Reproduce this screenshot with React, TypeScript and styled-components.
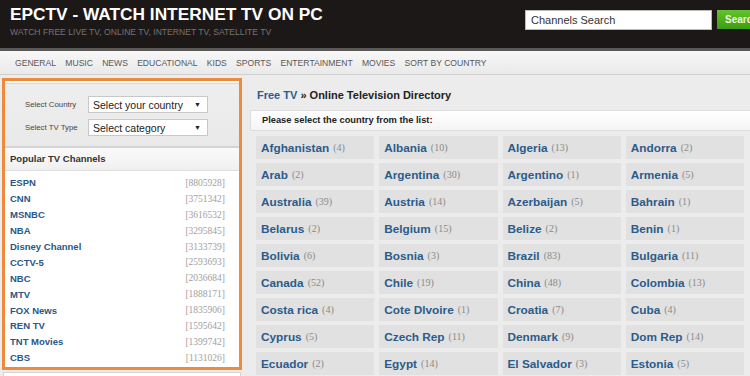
import styled, { createGlobalStyle } from "styled-components";

const GlobalStyle = createGlobalStyle`
  html, body {
    margin: 0;
    padding: 0;
    background: #ececec;
    font-family: "Liberation Sans", Arial, sans-serif;
    overflow: hidden;
  }
`;

const menu = [
  "GENERAL",
  "MUSIC",
  "NEWS",
  "EDUCATIONAL",
  "KIDS",
  "SPORTS",
  "ENTERTAINMENT",
  "MOVIES",
  "SORT BY COUNTRY",
];

const channels: [string, string][] = [
  ["ESPN", "8805928"],
  ["CNN", "3751342"],
  ["MSNBC", "3616532"],
  ["NBA", "3295845"],
  ["Disney Channel", "3133739"],
  ["CCTV-5", "2593693"],
  ["NBC", "2036684"],
  ["MTV", "1888171"],
  ["FOX News", "1835906"],
  ["REN TV", "1595642"],
  ["TNT Movies", "1399742"],
  ["CBS", "1131026"],
];

const countries: [string, number][] = [
  ["Afghanistan", 4], ["Albania", 10], ["Algeria", 13], ["Andorra", 2],
  ["Arab", 2], ["Argentina", 30], ["Argentino", 1], ["Armenia", 5],
  ["Australia", 39], ["Austria", 14], ["Azerbaijan", 5], ["Bahrain", 1],
  ["Belarus", 2], ["Belgium", 15], ["Belize", 2], ["Benin", 1],
  ["Bolivia", 6], ["Bosnia", 3], ["Brazil", 83], ["Bulgaria", 11],
  ["Canada", 52], ["Chile", 19], ["China", 48], ["Colombia", 13],
  ["Costa rica", 4], ["Cote Dlvoire", 1], ["Croatia", 7], ["Cuba", 4],
  ["Cyprus", 5], ["Czech Rep", 11], ["Denmark", 9], ["Dom Rep", 14],
  ["Ecuador", 2], ["Egypt", 14], ["El Salvador", 3], ["Estonia", 5],
];

const App = () => {
  return (
    <Page>
      <GlobalStyle />
      <Header>
        <Brand>
          <SiteTitle>EPCTV - WATCH INTERNET TV ON PC</SiteTitle>
          <Tagline>WATCH FREE LIVE TV, ONLINE TV, INTERNET TV, SATELLITE TV</Tagline>
        </Brand>
        <SearchForm>
          <SearchInput>Channels Search</SearchInput>
          <SearchButton>Search</SearchButton>
        </SearchForm>
      </Header>
      <Nav>
        {menu.map((item) => (
          <NavItem key={item}>{item}</NavItem>
        ))}
      </Nav>
      <Content>
        <SidebarColumn>
          <Highlight>
            <Filters>
              <FilterLabel>Select Country</FilterLabel>
              <FakeSelect>
                Select your country <Arrow>▼</Arrow>
              </FakeSelect>
              <FilterLabel>Select TV Type</FilterLabel>
              <FakeSelect>
                Select category <Arrow>▼</Arrow>
              </FakeSelect>
            </Filters>
            <PopularHeader>Popular TV Channels</PopularHeader>
            <ChannelList>
              {channels.map(([name, count]) => (
                <ChannelRow key={name}>
                  <ChannelName>{name}</ChannelName>
                  <ChannelCount>[{count}]</ChannelCount>
                </ChannelRow>
              ))}
            </ChannelList>
          </Highlight>
          <NextPanel />
        </SidebarColumn>
        <Main>
          <Breadcrumb>
            <Crumb>Free TV</Crumb> » Online Television Directory
          </Breadcrumb>
          <Notice>Please select the country from the list:</Notice>
          <CountryGrid>
            {countries.map(([name, n]) => (
              <CountryCell key={name}>
                {name}
                <CountryCount>({n})</CountryCount>
              </CountryCell>
            ))}
          </CountryGrid>
        </Main>
      </Content>
    </Page>
  );
};

const Page = styled.div`
  width: 750px;
  height: 376px;
  overflow: hidden;
`;

const Header = styled.header`
  height: 48px;
  background: #1c1817;
  border-bottom: 3px solid #5a5857;
  display: flex;
  align-items: flex-start;
  padding-left: 10px;
`;

const Brand = styled.div`
  padding-top: 5px;
`;

const SiteTitle = styled.h1`
  margin: 0;
  font-size: 17.3px;
  line-height: 18px;
  font-weight: bold;
  color: #ffffff;
`;

const Tagline = styled.div`
  margin-top: 4px;
  font-size: 8.6px;
  color: #767473;
`;

const SearchForm = styled.div`
  margin-left: auto;
  margin-right: -29px;
  margin-top: 10px;
  display: flex;
  gap: 5px;
  flex-shrink: 0;
`;

const SearchInput = styled.div`
  width: 180px;
  height: 18px;
  background: #fff;
  border: 1px solid #bbb;
  padding-left: 5px;
  font-size: 11px;
  line-height: 18px;
  color: #333;
`;

const SearchButton = styled.div`
  width: 54px;
  height: 19px;
  background: linear-gradient(#62c42a, #3e9d12);
  color: #eaf7dd;
  font-size: 10px;
  font-weight: bold;
  line-height: 19px;
  padding-left: 8px;
`;

const Nav = styled.nav`
  height: 23px;
  background: linear-gradient(#f8f8f8, #e9e9e9);
  border-bottom: 1px solid #cfcfcf;
  display: flex;
  align-items: center;
  gap: 9.2px;
  padding-left: 15px;
`;

const NavItem = styled.span`
  font-size: 8.6px;
  color: #575757;
  white-space: nowrap;
`;

const Content = styled.div`
  display: flex;
  gap: 8px;
  padding: 3px 0 0 2px;
`;

const SidebarColumn = styled.aside`
  width: 240px;
  flex-shrink: 0;
  display: flex;
  flex-direction: column;
`;

const Highlight = styled.div`
  border: 3px solid #ef8a3c;
  background: #fff;
`;

const Filters = styled.div`
  margin-top: 2px;
  border-top: 1px solid #d9d9d9;
  border-bottom: 2px solid #d4d4d4;
  background: linear-gradient(#eeeeee, #e9e9e9);
  padding: 12px 0 10px 20px;
  display: grid;
  grid-template-columns: 55px 120px;
  column-gap: 8px;
  row-gap: 6px;
  align-items: center;
`;

const FilterLabel = styled.span`
  font-size: 7.8px;
  color: #444;
  white-space: nowrap;
`;

const FakeSelect = styled.div`
  height: 15px;
  background: #fff;
  border: 1px solid #c8c8c8;
  padding: 0 6px 0 4px;
  display: flex;
  align-items: center;
  justify-content: space-between;
  font-size: 10.5px;
  color: #222;
`;

const Arrow = styled.span`
  font-size: 7px;
  color: #222;
`;

const PopularHeader = styled.div`
  height: 22px;
  line-height: 22px;
  background: linear-gradient(#fafafa, #f0f0f0);
  border-bottom: 1px solid #dedede;
  padding-left: 5px;
  font-size: 9.5px;
  font-weight: bold;
  color: #333;
`;

const ChannelList = styled.ul`
  list-style: none;
  margin: 0;
  padding: 4px 14px 1px 5px;
`;

const ChannelRow = styled.li`
  height: 15.9px;
  display: flex;
  align-items: center;
  justify-content: space-between;
`;

const ChannelName = styled.span`
  font-size: 9.5px;
  font-weight: bold;
  color: #2a5787;
`;

const ChannelCount = styled.span`
  font-family: "Liberation Serif", "Times New Roman", serif;
  font-size: 9.5px;
  color: #a0a0a0;
`;

const NextPanel = styled.div`
  margin: 2px 1px 0;
  height: 30px;
  background: #fff;
  border: 1px solid #d4d4d4;
`;

const Main = styled.main`
  flex: 1;
  min-width: 0;
`;

const Breadcrumb = styled.div`
  margin: 10px 0 0 7px;
  font-size: 11px;
  line-height: 14px;
  font-weight: bold;
  color: #222;
`;

const Crumb = styled.span`
  color: #2a5d8f;
`;

const Notice = styled.div`
  margin-top: 8px;
  height: 19px;
  line-height: 19px;
  background: linear-gradient(#ffffff, #f4f4f4);
  border: 1px solid #dcdcdc;
  border-right: none;
  padding-left: 11px;
  font-size: 9.3px;
  font-weight: bold;
  color: #222;
`;

const CountryGrid = styled.div`
  margin-top: 5px;
  padding: 0 6px;
  display: grid;
  grid-template-columns: repeat(4, 1fr);
  grid-auto-rows: 23px;
  gap: 4px 5px;
`;

const CountryCell = styled.div`
  background: #e1e1e1;
  padding-left: 5px;
  display: flex;
  align-items: center;
  font-size: 11.8px;
  font-weight: bold;
  color: #2b5b8b;
  white-space: nowrap;
`;

const CountryCount = styled.span`
  margin-left: 4px;
  font-family: "Liberation Serif", "Times New Roman", serif;
  font-size: 10px;
  font-weight: normal;
  color: #8a8a8a;
`;

export default App;
